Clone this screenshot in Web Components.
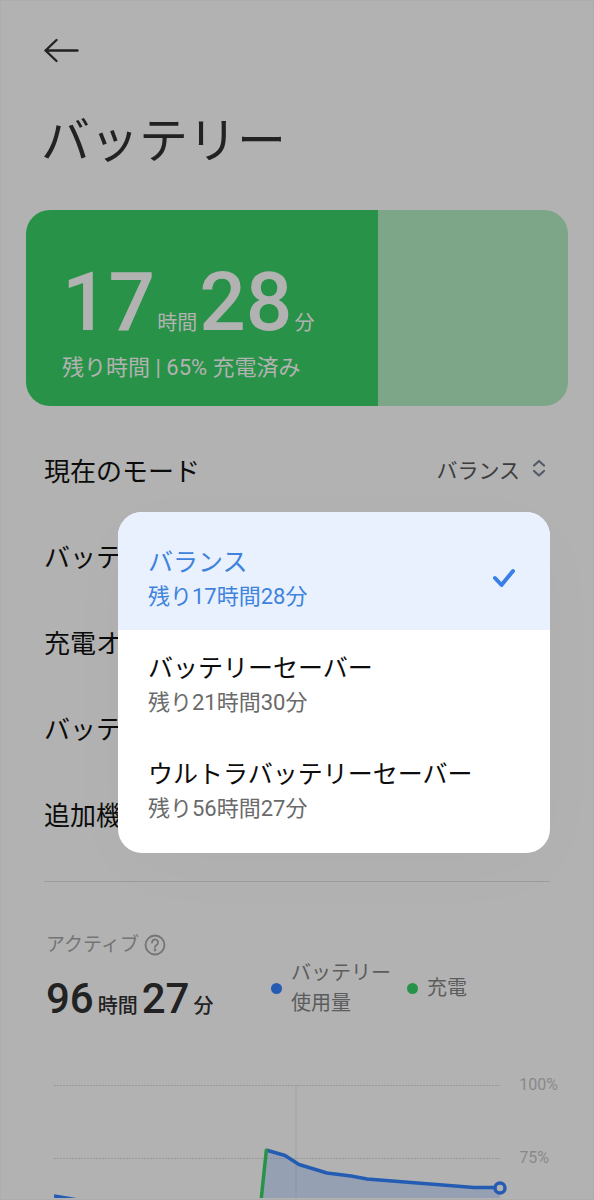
<!DOCTYPE html>
<html lang="ja">
<head>
<meta charset="utf-8">
<meta name="viewport" content="width=device-width, initial-scale=1">
<title>バッテリー</title>
<style>
  html {
    background: #b2b2b2;
  }
  body {
    margin: 0;
    font-family: Roboto, "Noto Sans CJK JP", sans-serif;
    color: #0c0c0c;
  }
</style>
</head>
<body>
<battery-page>
  <page-header slot="header">バッテリー</page-header>
  <battery-card level="65" hours="17" minutes="28"></battery-card>
  <settings-list>
    <mode-row label="現在のモード" value="バランス">
      <mode-menu>
        <mode-option selected remaining="残り17時間28分">バランス</mode-option>
        <mode-option remaining="残り21時間30分">バッテリーセーバー</mode-option>
        <mode-option remaining="残り56時間27分">ウルトラバッテリーセーバー</mode-option>
      </mode-menu>
    </mode-row>
    <settings-row>バッテ</settings-row>
    <settings-row>充電オ</settings-row>
    <settings-row>バッテ</settings-row>
    <settings-row>追加機</settings-row>
  </settings-list>
  <usage-summary hours="96" minutes="27">
    <legend-item color="#245cb4">バッテリー<br>使用量</legend-item>
    <legend-item color="#289348">充電</legend-item>
  </usage-summary>
  <usage-chart></usage-chart>
</battery-page>

<script>
class BaseElement extends HTMLElement {
  constructor() {
    super();
    this.attachShadow({ mode: 'open' });
  }

  connectedCallback() {
    this.shadowRoot.innerHTML = this.render();
  }

  attr(name) {
    return this.getAttribute(name) || '';
  }
}

class BatteryPage extends BaseElement {
  render() {
    return `
      <style>
        :host {
          display: flex;
          flex-direction: column;
          box-sizing: border-box;
          height: 100vh;
          overflow: hidden;
          border: 1px solid #adadad;
          background: #b2b2b2;
        }
      </style>
      <slot name="header"></slot>
      <slot></slot>
    `;
  }
}

class PageHeader extends BaseElement {
  render() {
    return `
      <style>
        :host {
          display: block;
          flex: none;
          padding: 33px 40px 0;
        }
        button {
          display: block;
          padding: 0;
          border: 0;
          background: none;
          color: #222;
        }
        svg { display: block; }
        h1 {
          margin: 40px 0 0;
          font-size: 49px;
          font-weight: 400;
          line-height: 72px;
          color: #222;
        }
      </style>
      <button type="button" aria-label="戻る">
        <svg width="40" height="32" viewBox="0 0 40 32" fill="none" stroke="currentColor" stroke-width="2.4" stroke-linecap="round" stroke-linejoin="round">
          <path d="M36.500 16.500H4.500M15.500 6 4.500 16.500 15.500 27"/>
        </svg>
      </button>
      <h1><slot></slot></h1>
    `;
  }
}

class BatteryCard extends BaseElement {
  render() {
    const level = this.attr('level');
    return `
      <style>
        :host {
          display: block;
          flex: none;
          box-sizing: border-box;
          margin: 32px 25px 0;
          padding: 46px 36px 22px;
          border-radius: 24px;
          background: linear-gradient(to right, #289348 ${level}%, #7da688 ${level}%);
          color: #b2b2b2;
        }
        .time {
          display: flex;
          align-items: baseline;
          gap: 2px;
          font-size: 20px;
          line-height: 24px;
        }
        b {
          font-size: 82px;
          font-weight: 500;
          line-height: 92px;
        }
        p {
          margin: 4px 0 0;
          font-size: 22px;
          line-height: 32px;
        }
      </style>
      <div class="time"><b>${this.attr('hours')}</b>時間<b>${this.attr('minutes')}</b>分</div>
      <p>残り時間 | ${level}% 充電済み</p>
    `;
  }
}

class SettingsList extends BaseElement {
  render() {
    return `
      <style>
        :host {
          display: block;
          flex: none;
          margin: 20px 43px 0;
          padding-bottom: 25px;
          border-bottom: 1px solid #9c9c9c;
        }
      </style>
      <slot></slot>
    `;
  }
}

class SettingsRow extends BaseElement {
  render() {
    return `
      <style>
        :host {
          display: block;
          font-size: 26px;
        }
        a {
          display: flex;
          align-items: center;
          height: 86px;
          color: inherit;
          text-decoration: none;
        }
      </style>
      <a href="#"><slot></slot></a>
    `;
  }
}

class ModeRow extends BaseElement {
  render() {
    return `
      <style>
        :host {
          display: block;
          position: relative;
        }
        button {
          display: flex;
          align-items: center;
          width: 100%;
          height: 86px;
          padding: 0;
          border: 0;
          background: none;
          font: inherit;
          font-size: 26px;
          color: inherit;
        }
        .value {
          margin-left: auto;
          font-size: 21px;
          color: #3c3c3c;
        }
        svg {
          margin: 0 4px 0 10px;
          color: #555a6b;
        }
      </style>
      <button type="button" aria-haspopup="listbox" aria-expanded="true">
        <span>${this.attr('label')}</span>
        <span class="value">${this.attr('value')}</span>
        <svg width="16" height="20" viewBox="0 0 16 20" fill="none" stroke="currentColor" stroke-width="2.2" stroke-linecap="round" stroke-linejoin="round">
          <path d="M4 6.500 9 2 14 6.500M4 12 9 16.500 14 12"/>
        </svg>
      </button>
      <slot></slot>
    `;
  }
}

class ModeMenu extends BaseElement {
  render() {
    return `
      <style>
        :host {
          display: block;
          position: absolute;
          z-index: 1;
          top: 86px;
          left: 74px;
          right: 0;
          overflow: hidden;
          border-radius: 24px;
          background: #fff;
          box-shadow: 0 16px 80px rgba(0, 0, 0, 0.02);
        }
        ::slotted(:first-child) { --pad-top: 33px; }
        ::slotted(:last-child) { --pad-bottom: 28px; }
      </style>
      <slot></slot>
    `;
  }
}

class ModeOption extends BaseElement {
  render() {
    const selected = this.hasAttribute('selected');
    const check = `
      <svg width="26" height="22" viewBox="0 0 26 22" fill="none" stroke="#3880e8" stroke-width="4" stroke-linecap="round" stroke-linejoin="round">
        <path d="M4 10 10.500 17 22 3"/>
      </svg>`;
    return `
      <style>
        :host {
          display: block;
        }
        button {
          display: flex;
          align-items: center;
          justify-content: space-between;
          width: 100%;
          padding: var(--pad-top, 21px) 33px var(--pad-bottom, 17px) 30px;
          border: 0;
          background: none;
          font: inherit;
          text-align: left;
          color: #0c0c0c;
        }
        strong, small {
          display: block;
          font-weight: 400;
        }
        strong {
          font-size: 25px;
          line-height: 35px;
        }
        small {
          font-size: 22px;
          line-height: 33px;
          color: #6a6a6a;
        }
        .selected { background: #e9f1ff; }
        .selected, .selected small { color: #3f83dc; }
      </style>
      <button type="button" class="${selected ? 'selected' : ''}">
        <span>
          <strong><slot></slot></strong>
          <small>${this.attr('remaining')}</small>
        </span>
        ${selected ? check : ''}
      </button>
    `;
  }
}

class UsageSummary extends BaseElement {
  render() {
    return `
      <style>
        :host {
          display: grid;
          flex: none;
          grid-template-columns: 225px auto;
          justify-content: start;
          margin: 48px 40px 0 45px;
        }
        .label {
          display: flex;
          align-items: center;
          gap: 5px;
          font-size: 19px;
          line-height: 30px;
          color: #747474;
        }
        .time {
          display: flex;
          align-items: baseline;
          gap: 4px;
          margin-top: 14px;
          font-size: 20px;
          font-weight: 500;
          line-height: 24px;
          color: #222;
        }
        b {
          font-size: 42px;
          font-weight: 500;
          line-height: 50px;
        }
        .legend {
          display: flex;
          align-items: center;
          gap: 16px;
          height: 60px;
          padding-top: 28px;
        }
      </style>
      <div>
        <div class="label">
          アクティブ
          <svg width="22" height="22" viewBox="0 0 22 22" fill="none" stroke="currentColor" stroke-width="1.8" stroke-linecap="round">
            <circle cx="11" cy="11" r="9.5"/>
            <path d="M8 8.500a3 3 0 1 1 4.600 2.500c-1 .7-1.600 1.200-1.600 2.200"/>
            <circle cx="11" cy="16" r=".5" fill="currentColor"/>
          </svg>
        </div>
        <div class="time"><b>${this.attr('hours')}</b>時間<b>${this.attr('minutes')}</b>分</div>
      </div>
      <div class="legend"><slot></slot></div>
    `;
  }
}

class LegendItem extends BaseElement {
  render() {
    return `
      <style>
        :host {
          display: flex;
          align-items: center;
          gap: 9px;
          font-size: 20px;
          line-height: 30px;
          color: #5c5c5c;
        }
        i {
          width: 11px;
          height: 11px;
          border-radius: 50%;
          background: ${this.attr('color')};
        }
      </style>
      <i></i>
      <span><slot></slot></span>
    `;
  }
}

class UsageChart extends BaseElement {
  render() {
    return `
      <style>
        :host {
          display: flex;
          flex: 1;
          min-height: 0;
          gap: 8px;
          margin: 49px 35px 1px 53px;
          overflow: hidden;
        }
        svg {
          flex: 1;
          min-width: 0;
          height: 128px;
        }
        .scale {
          display: grid;
          grid-auto-rows: 73px;
          font-size: 16px;
          line-height: 24px;
          color: #898989;
        }
      </style>
      <svg viewBox="0 0 454 128" preserveAspectRatio="xMinYMin meet" fill="none" stroke-width="3.5" stroke-linejoin="round">
        <path d="M0 12.500H446M0 85.500H446" stroke="#999" stroke-width="1" stroke-dasharray="2 1"/>
        <path d="M242 12V128" stroke="#a2a2a2" stroke-width="1"/>
        <path d="M207 128 212 77 231 82.500 245 91.500 273 100 297 103 313 106 420 114.500H446V128Z" fill="#245cb4" fill-opacity=".2"/>
        <path d="M0 123 24 127" stroke="#245cb4"/>
        <path d="M212 77 231 82.500 245 91.500 273 100 297 103 313 106 420 114.500H446" stroke="#245cb4"/>
        <path d="M207 128 212.500 76" stroke="#289348"/>
        <circle cx="446" cy="115" r="5" fill="#b2b2b2" stroke="#245cb4"/>
      </svg>
      <div class="scale"><span>100%</span><span>75%</span></div>
    `;
  }
}

customElements.define('battery-page', BatteryPage);
customElements.define('page-header', PageHeader);
customElements.define('battery-card', BatteryCard);
customElements.define('settings-list', SettingsList);
customElements.define('settings-row', SettingsRow);
customElements.define('mode-row', ModeRow);
customElements.define('mode-menu', ModeMenu);
customElements.define('mode-option', ModeOption);
customElements.define('usage-summary', UsageSummary);
customElements.define('legend-item', LegendItem);
customElements.define('usage-chart', UsageChart);
</script>
</body>
</html>
